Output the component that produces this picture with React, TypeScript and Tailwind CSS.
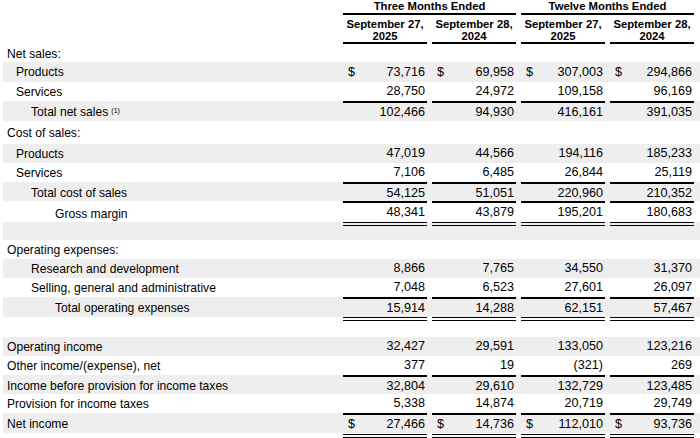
import React from "react";

type Row = {
  label?: string;
  sup?: string;
  indent?: number;
  values?: string[];
  dollar?: boolean;
  gray?: boolean;
  top?: boolean;
  dbl?: boolean;
  dblTop?: boolean;
  h: string;
};

const rows: Row[] = [
  { label: "Net sales:", indent: 0, h: "h-[18px]" },
  { label: "Products", indent: 1, values: ["73,716", "69,958", "307,003", "294,866"], dollar: true, gray: true, h: "h-[20px]" },
  { label: "Services", indent: 1, values: ["28,750", "24,972", "109,158", "96,169"], h: "h-[19px]" },
  { label: "Total net sales", sup: "(1)", indent: 2, values: ["102,466", "94,930", "416,161", "391,035"], gray: true, top: true, h: "h-[20px]" },
  { label: "Cost of sales:", indent: 0, h: "h-[23px]" },
  { label: "Products", indent: 1, values: ["47,019", "44,566", "194,116", "185,233"], gray: true, h: "h-[19px]" },
  { label: "Services", indent: 1, values: ["7,106", "6,485", "26,844", "25,119"], h: "h-[19px]" },
  { label: "Total cost of sales", indent: 2, values: ["54,125", "51,051", "220,960", "210,352"], gray: true, top: true, h: "h-[19px]" },
  { label: "Gross margin", indent: 3, values: ["48,341", "43,879", "195,201", "180,683"], top: true, dbl: true, h: "h-[21px]" },
  { gray: true, h: "h-[18px]" },
  { label: "Operating expenses:", indent: 0, h: "h-[19px]" },
  { label: "Research and development", indent: 2, values: ["8,866", "7,765", "34,550", "31,370"], gray: true, h: "h-[19px]" },
  { label: "Selling, general and administrative", indent: 2, values: ["7,048", "6,523", "27,601", "26,097"], h: "h-[19px]" },
  { label: "Total operating expenses", indent: 3, values: ["15,914", "14,288", "62,151", "57,467"], gray: true, top: true, h: "h-[20px]" },
  { h: "h-[20px]", dblTop: true },
  { label: "Operating income", indent: 0, values: ["32,427", "29,591", "133,050", "123,216"], gray: true, h: "h-[19px]" },
  { label: "Other income/(expense), net", indent: 0, values: ["377", "19", "(321)", "269"], h: "h-[19px]" },
  { label: "Income before provision for income taxes", indent: 0, values: ["32,804", "29,610", "132,729", "123,485"], gray: true, top: true, h: "h-[19px]" },
  { label: "Provision for income taxes", indent: 0, values: ["5,338", "14,874", "20,719", "29,749"], h: "h-[19px]" },
  { label: "Net income", indent: 0, values: ["27,466", "14,736", "112,010", "93,736"], dollar: true, gray: true, top: true, h: "h-[20px]" },
];

const indentCls = ["pl-[4px]", "pl-[13px]", "pl-[28px]", "pl-[52px]"];

const grid = "grid grid-cols-[335px_84px_84px_84px_84px] gap-x-[5px]";

function Cell({
  v,
  dollar,
  top,
  dbl,
  dblTop,
}: {
  v?: string;
  dollar?: boolean;
  top?: boolean;
  dbl?: boolean;
  dblTop?: boolean;
}) {
  return (
    <div
      className={
        "flex items-center justify-between pl-[5px] pr-[2px] text-[12.6px] " +
        (top ? "border-t-2 border-black " : "") +
        (dblTop ? "border-t-[4px] border-double border-black " : "") +
        (dbl ? "border-b-[4px] border-double border-black " : "")
      }
    >
      <span>{dollar ? "$" : ""}</span>
      <span>{v ?? ""}</span>
    </div>
  );
}

export default function App() {
  return (
    <div
      className="w-[700px] h-[438px] bg-white text-[12.1px] text-black pl-[3px] overflow-hidden"
      style={{ fontFamily: '"Liberation Sans", Arial, sans-serif' }}
    >
      {/* Header row 1 */}
      <div className={grid + " h-[15px] font-bold text-[11.3px] leading-[12px]"}>
        <div />
        <div className="col-span-2 border-b-2 border-black text-center">Three Months Ended</div>
        <div className="col-span-2 border-b-2 border-black text-center">Twelve Months Ended</div>
      </div>
      {/* Header row 2 */}
      <div className={grid + " h-[29px] font-bold text-[11.3px] leading-[12px]"}>
        <div />
        {[
          ["September 27,", "2025"],
          ["September 28,", "2024"],
          ["September 27,", "2025"],
          ["September 28,", "2024"],
        ].map((d, i) => (
          <div key={i} className="border-b-2 border-black text-center pt-[3px]">
            <div>{d[0]}</div>
            <div>{d[1]}</div>
          </div>
        ))}
      </div>
      {rows.map((r, i) => (
        <div key={i} className={grid + " " + r.h + (r.gray ? " bg-[#eeeeee]" : "")}>
          <div className={"flex items-center whitespace-nowrap pt-[1px] " + indentCls[r.indent ?? 0]}>
            {r.label}
            {r.sup && <sup className="text-[7px] ml-[3px] relative top-[-1px]">{r.sup}</sup>}
          </div>
          {r.values
            ? r.values.map((v, j) => <Cell key={j} v={v} dollar={r.dollar} top={r.top} dbl={r.dbl} />)
            : [0, 1, 2, 3].map((j) => <Cell key={j} dbl={r.dbl} dblTop={r.dblTop} />)}
        </div>
      ))}
      <div className={grid + " h-[6px]"}>
        <div />
        {[0, 1, 2, 3].map((j) => (
          <div key={j} className="mt-[1px] border-t-[4px] border-double border-black" />
        ))}
      </div>
    </div>
  );
}
